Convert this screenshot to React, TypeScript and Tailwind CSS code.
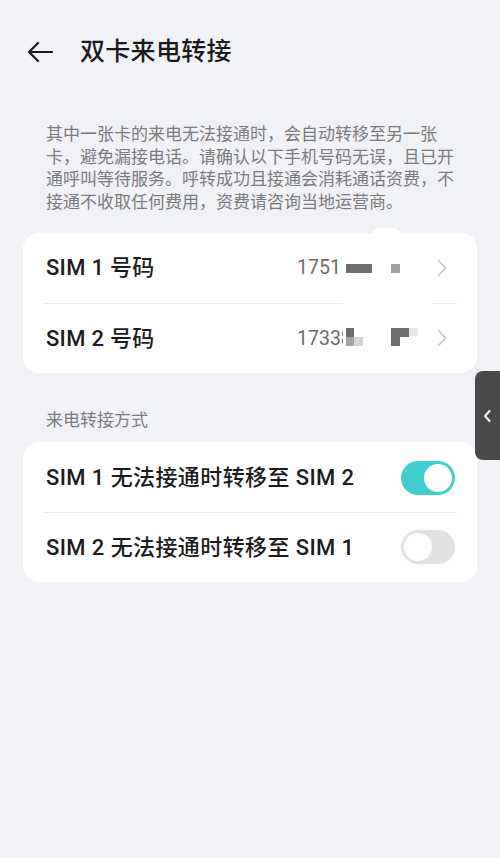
import React from "react";

const font = { fontFamily: 'Roboto, "Noto Sans CJK SC", sans-serif' };

function Chevron() {
  return (
    <svg width="10" height="18" viewBox="0 0 10 18" className="ml-[10px] shrink-0">
      <path d="M1.5 1.5 L8.5 9 L1.5 16.5" fill="none" stroke="#c4c4c4" strokeWidth="1.6" strokeLinecap="round" strokeLinejoin="round" />
    </svg>
  );
}

function Toggle({ on }: { on: boolean }) {
  return (
    <div
      className={`ml-auto w-[54px] h-[34px] rounded-full flex items-center px-[3px] ${
        on ? "bg-[#3fcfcf] justify-end" : "bg-[#e2e2e2] justify-start"
      }`}
    >
      <div className="w-[28px] h-[28px] rounded-full bg-white" />
    </div>
  );
}

export default function App() {
  return (
    <div className="relative w-[500px] h-[858px] bg-[#f1f2f6] overflow-hidden" style={font}>
      {/* Header */}
      <div className="h-[104px] flex items-center">
        <svg width="26" height="22" viewBox="0 0 26 22" className="ml-[27px]">
          <path d="M25 11 H2 M11 2 L2 11 L11 20" fill="none" stroke="#1a1a1a" strokeWidth="2.2" strokeLinecap="round" strokeLinejoin="round" />
        </svg>
        <div className="ml-[27px] text-[25px] font-medium text-[#1a1a1a] tracking-[0.3px]">双卡来电转接</div>
      </div>

      {/* Description */}
      <div className="mt-[19px] px-[46px] text-[17px] leading-[22.7px] text-[#7b7b7b] whitespace-nowrap">
        其中一张卡的来电无法接通时，会自动转移至另一张
        <br />
        卡，避免漏接电话。请确认以下手机号码无误，且已开
        <br />
        通呼叫等待服务。呼转成功且接通会消耗通话资费，不
        <br />
        接通不收取任何费用，资费请咨询当地运营商。
      </div>

      {/* Card 1 */}
      <div className="relative mx-[23px] mt-[19px] bg-white rounded-[16px]">
        <div className="h-[70px] flex items-center pl-[23px] pr-[30px]">
          <span className="text-[22px] font-medium text-[#1c1c1c] tracking-[0.3px]">SIM 1 号码</span>
          <span className="ml-auto w-[130px] text-[19.5px] text-[#6b6b6b]">1751</span>
          <Chevron />
        </div>
        <div className="mx-[20px] h-px bg-[#ececec]" />
        <div className="h-[69px] flex items-center pl-[23px] pr-[30px]">
          <span className="text-[22px] font-medium text-[#1c1c1c] tracking-[0.3px]">SIM 2 号码</span>
          <span className="ml-auto w-[130px] text-[19.5px] text-[#6b6b6b]">17338</span>
          <Chevron />
        </div>

        {/* privacy mask overlay */}
        <div className="absolute left-[320px] top-0 bottom-0 w-[89px] bg-white" />
        <div className="absolute left-[348px] top-[-5px] w-[30px] h-[8px] bg-white rounded-t-full" />
        <div className="absolute left-[323px] top-[31px] w-[26px] h-[9px] bg-[#6e6e6e]" />
        <div className="absolute left-[368px] top-[31px] w-[9px] h-[9px] bg-[#a0a0a0]" />
        <div className="absolute left-[323px] top-[95px] w-[8px] h-[9px] bg-[#6e6e6e]" />
        <div className="absolute left-[323px] top-[104px] w-[8px] h-[9px] bg-[#a3a3a3]" />
        <div className="absolute left-[331px] top-[104px] w-[9px] h-[9px] bg-[#d4d4d4]" />
        <div className="absolute left-[368px] top-[95px] w-[18px] h-[9px] bg-[#6e6e6e]" />
        <div className="absolute left-[368px] top-[104px] w-[9px] h-[9px] bg-[#6e6e6e]" />
        <div className="absolute left-[386px] top-[95px] w-[9px] h-[8px] bg-[#e8e8e8]" />
      </div>

      {/* Section label */}
      <div className="mt-[36px] px-[46px] text-[17px] leading-[22px] text-[#7b7b7b]">来电转接方式</div>

      {/* Card 2 */}
      <div className="mx-[23px] mt-[11px] bg-white rounded-[16px]">
        <div className="h-[70px] flex items-center pl-[23px] pr-[22px] pt-[2px]">
          <span className="text-[22px] font-medium text-[#1c1c1c] tracking-[0.4px]">SIM 1 无法接通时转移至 SIM 2</span>
          <Toggle on />
        </div>
        <div className="mx-[20px] h-px bg-[#ececec]" />
        <div className="h-[69px] flex items-center pl-[23px] pr-[22px]">
          <span className="text-[22px] font-medium text-[#1c1c1c] tracking-[0.4px]">SIM 2 无法接通时转移至 SIM 1</span>
          <Toggle on={false} />
        </div>
      </div>

      {/* Floating side tab */}
      <div className="absolute right-0 top-[371px] w-[25px] h-[89px] bg-[#4a4a4a] rounded-l-[8px] flex items-center justify-center">
        <svg width="9" height="14" viewBox="0 0 9 14">
          <path d="M6.5 2 L2 7 L6.5 12" fill="none" stroke="#ffffff" strokeWidth="2" strokeLinecap="round" strokeLinejoin="round" />
        </svg>
      </div>
    </div>
  );
}
